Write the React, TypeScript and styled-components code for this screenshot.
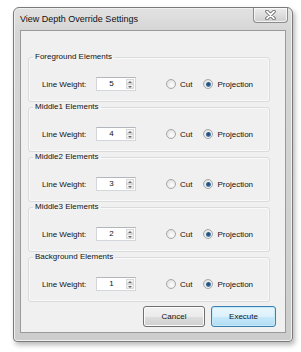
import React from "react";
import styled, { createGlobalStyle } from "styled-components";

const Global = createGlobalStyle`
  html, body {
    margin: 0;
    padding: 0;
    background: #ffffff;
    width: 301px;
    height: 352px;
    overflow: hidden;
  }
  * { box-sizing: border-box; }
`;

const Page = styled.div`
  padding: 7px 0 0 13px;
  font-family: "Liberation Sans", Arial, sans-serif;
  color: #111111;
`;

const Window = styled.div`
  width: 280px;
  height: 335px;
  border: 1px solid #7a7a7a;
  border-radius: 6px 6px 4px 4px;
  background: linear-gradient(#e2e2e2 0, #d6d6d6 22px, #cdcdcd 100%);
  box-shadow: 2px 3px 5px rgba(0, 0, 0, 0.28), inset 0 0 0 1px #f0f0f0;
  display: flex;
  flex-direction: column;
  padding: 0 6px 8px 6px;
`;

const TitleBar = styled.div`
  height: 22px;
  display: flex;
  align-items: flex-start;
`;

const Title = styled.div`
  flex: 1;
  font-size: 9px;
  line-height: 22px;
  color: #111111;
  white-space: nowrap;
`;

const CloseButton = styled.div`
  width: 35px;
  height: 15px;
  margin-right: -2px;
  border: 1px solid #8c8c8c;
  border-top: none;
  border-radius: 0 0 4px 4px;
  background: linear-gradient(#ececec, #cfcfcf);
  box-shadow: inset 0 0 0 1px rgba(255, 255, 255, 0.7);
  display: flex;
  align-items: center;
  justify-content: center;
`;

const Client = styled.div`
  flex: 1;
  background: #f0f0f0;
  border: 1px solid #9a9a9a;
  padding: 21px 15px 0 7px;
  display: flex;
  flex-direction: column;
`;

const Group = styled.fieldset`
  margin: 0;
  padding: 0;
  height: 50px;
  min-width: 0;
  border: 1px solid #d9dbdd;
  border-radius: 3px;
  box-shadow: inset 0 0 0 1px rgba(255, 255, 255, 0.6);
`;

const Legend = styled.legend`
  font-size: 8px;
  line-height: 10px;
  padding: 0 2px;
  margin-left: 4px;
`;

const Row = styled.div`
  display: flex;
  align-items: center;
  height: 14px;
  margin-top: 15px;
  padding-left: 13px;
  font-size: 8px;
`;

const FieldLabel = styled.span`
  width: 54px;
  white-space: nowrap;
`;

const Spinner = styled.div`
  width: 40px;
  height: 14px;
  display: flex;
  border: 1px solid #d3d6db;
  border-top-color: #b2b5bb;
  background: #ffffff;
`;

const SpinValue = styled.div`
  flex: 1;
  text-align: center;
  line-height: 12px;
  font-size: 8px;
`;

const SpinButtons = styled.div`
  width: 9px;
  display: flex;
  flex-direction: column;
  padding: 1px 1px 1px 0;
`;

const SpinButton = styled.div`
  flex: 1;
  display: flex;
  align-items: center;
  justify-content: center;
  background: linear-gradient(#f7f7f7, #e6e6e6);
  border: 1px solid #d8d8d8;
`;

const Radios = styled.div`
  display: flex;
  align-items: center;
  margin-left: 30px;
`;

const Radio = styled.div<{ $gap: number }>`
  display: flex;
  align-items: center;
  margin-left: ${(p) => p.$gap}px;
`;

const RadioCircle = styled.span<{ $checked?: boolean }>`
  width: 10px;
  height: 10px;
  border-radius: 50%;
  border: 1px solid #a6a7a7;
  background: radial-gradient(circle at 60% 65%, #ffffff 0, #e8e8e8 60%, #d3d3d3 100%);
  display: flex;
  align-items: center;
  justify-content: center;
  &::after {
    content: "";
    display: ${(p) => (p.$checked ? "block" : "none")};
    width: 5px;
    height: 5px;
    border-radius: 50%;
    background: radial-gradient(circle at 45% 40%, #243f60 0, #35689b 50%, #8fbbe0 100%);
  }
`;

const RadioText = styled.span`
  margin-left: 4px;
  white-space: nowrap;
`;

const ButtonRow = styled.div`
  display: flex;
  justify-content: flex-end;
  gap: 6px;
  margin-top: 4px;
  margin-right: -6px;
`;

const Button = styled.div<{ $default?: boolean; $w: number }>`
  width: ${(p) => p.$w}px;
  height: 21px;
  border: 1px solid ${(p) => (p.$default ? "#3c7fb1" : "#707070")};
  border-radius: 3px;
  background: ${(p) =>
    p.$default
      ? "linear-gradient(#eaf6fd 0, #dcf1fc 50%, #c6e8fb 51%, #b2ddf4 100%)"
      : "linear-gradient(#f2f2f2 0, #ebebeb 50%, #dddddd 51%, #cfcfcf 100%)"};
  box-shadow: inset 0 0 0 1px ${(p) => (p.$default ? "#c2eaf8" : "#fcfcfc")};
  font-size: 8px;
  display: flex;
  align-items: center;
  justify-content: center;
`;

const Arrow = ({ up }: { up?: boolean }) => (
  <svg width="4" height="2" viewBox="0 0 4 2">
    <path d={up ? "M0 2 L2 0 L4 2 Z" : "M0 0 L2 2 L4 0 Z"} fill="#6a6a6a" />
  </svg>
);

const CloseGlyph = () => (
  <svg width="11" height="10" viewBox="0 0 11 10">
    <path d="M2 1.5 L9 8.5 M9 1.5 L2 8.5" stroke="#5a5a5a" strokeWidth="3.4" strokeLinecap="round" />
    <path d="M2 1.5 L9 8.5 M9 1.5 L2 8.5" stroke="#ffffff" strokeWidth="1.8" strokeLinecap="round" />
  </svg>
);

const groups = [
  { name: "Foreground Elements", value: 5 },
  { name: "Middle1 Elements", value: 4 },
  { name: "Middle2 Elements", value: 3 },
  { name: "Middle3 Elements", value: 2 },
  { name: "Background Elements", value: 1 },
];

export default function App() {
  return (
    <Page>
      <Global />
      <Window>
        <TitleBar>
          <Title>View Depth Override Settings</Title>
          <CloseButton>
            <CloseGlyph />
          </CloseButton>
        </TitleBar>
        <Client>
          {groups.map((g) => (
            <Group key={g.name}>
              <Legend>{g.name}</Legend>
              <Row>
                <FieldLabel>Line Weight:</FieldLabel>
                <Spinner>
                  <SpinValue>{g.value}</SpinValue>
                  <SpinButtons>
                    <SpinButton>
                      <Arrow up />
                    </SpinButton>
                    <SpinButton>
                      <Arrow />
                    </SpinButton>
                  </SpinButtons>
                </Spinner>
                <Radios>
                  <Radio $gap={0}>
                    <RadioCircle />
                    <RadioText>Cut</RadioText>
                  </Radio>
                  <Radio $gap={11}>
                    <RadioCircle $checked />
                    <RadioText>Projection</RadioText>
                  </Radio>
                </Radios>
              </Row>
            </Group>
          ))}
          <ButtonRow>
            <Button $w={62}>Cancel</Button>
            <Button $w={65} $default>
              Execute
            </Button>
          </ButtonRow>
        </Client>
      </Window>
    </Page>
  );
}
